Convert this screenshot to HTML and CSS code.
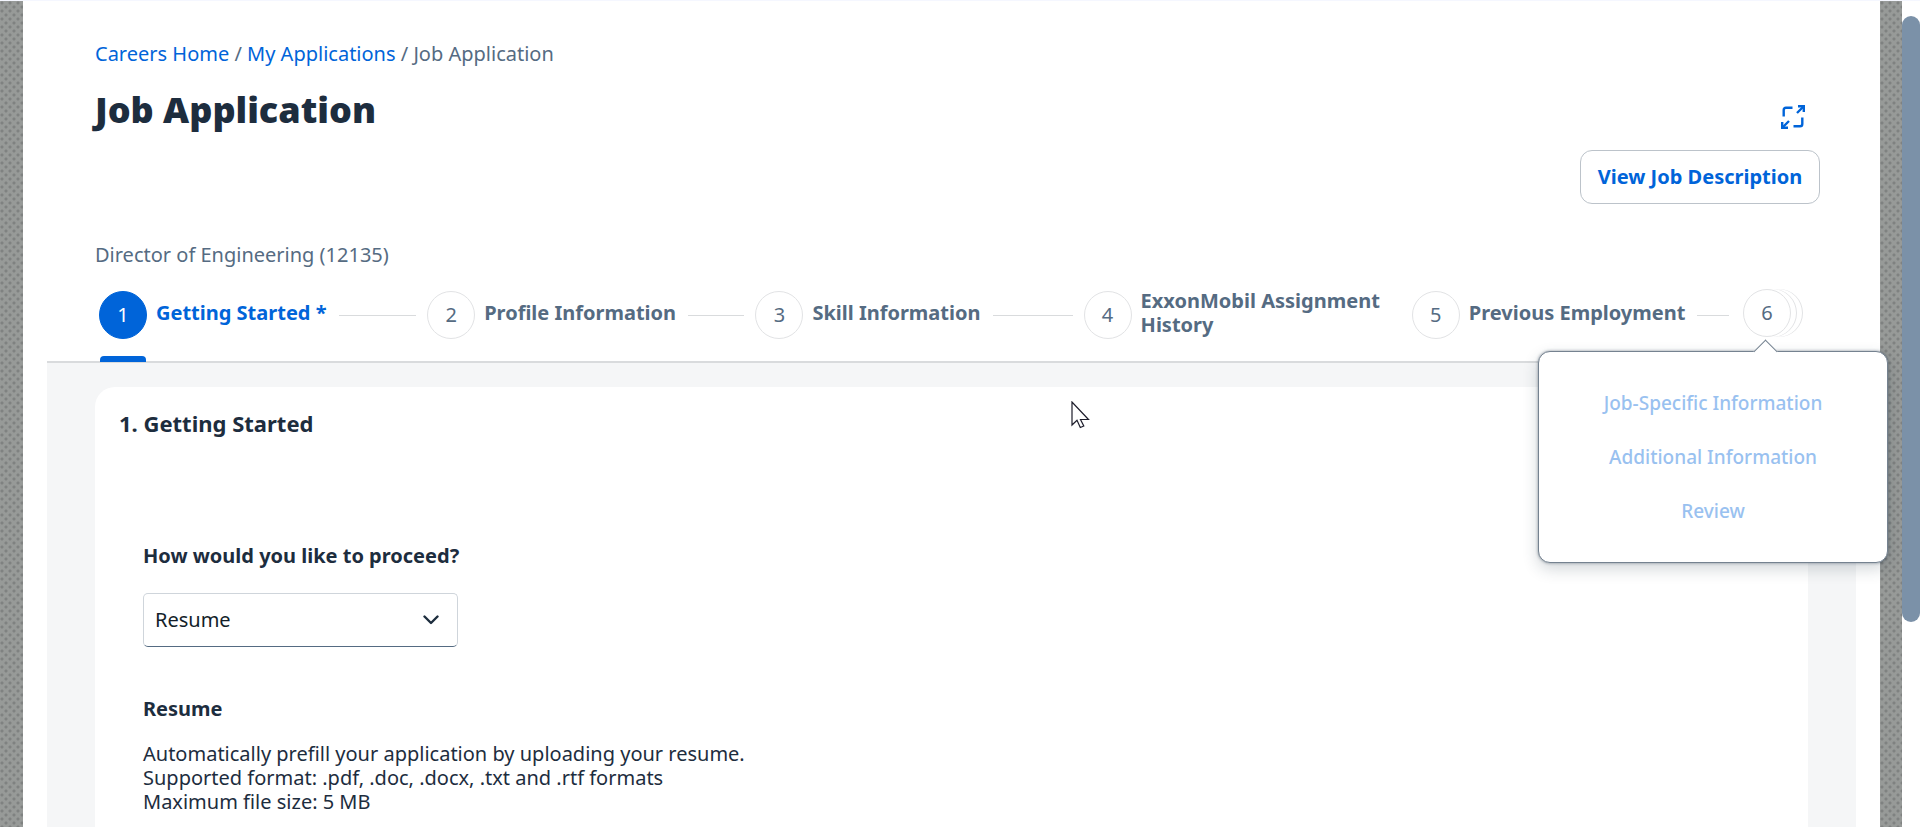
FILE: index.html
```html
<!DOCTYPE html>
<html lang="en">
<head>
    <meta charset="UTF-8">
    <meta name="viewport" content="width=device-width, initial-scale=1.0">
    <title>Job Application</title>
    <link rel="stylesheet" href="styles.css">
</head>
<body>

<div class="page">
    <main class="sheet">
        <header class="page-header">
            <nav class="breadcrumb" aria-label="Breadcrumb">
                <a href="#">Careers Home</a> / <a href="#">My Applications</a> / <span>Job Application</span>
            </nav>

            <div class="title-row">
                <h1>Job Application</h1>
                <div class="actions">
                    <button type="button" class="icon-btn" aria-label="Full screen">
                        <svg width="24" height="24" viewBox="0 0 24 24" fill="none" stroke="currentColor" stroke-width="2.4">
                            <path d="M2.7 11.5V5Q2.7 2.7 5 2.7H11.5"/>
                            <path d="M12.5 21.3H19Q21.3 21.3 21.3 19V12.5"/>
                            <path d="M16 8l6-6M8 16l-6 6"/>
                            <path d="M17 1.2h5.8V7M1.2 17v5.8H7"/>
                        </svg>
                    </button>
                    <button type="button" class="outline-btn">View Job Description</button>
                </div>
            </div>

            <p class="job-name">Director of Engineering (12135)</p>

            <!-- Wizard steps -->
            <ol class="steps">
                <li class="step active">
                    <span class="circle">1</span>
                    <span class="step-label">Getting Started *</span>
                    <span class="line"></span>
                </li>
                <li class="step">
                    <span class="circle">2</span>
                    <span class="step-label">Profile Information</span>
                    <span class="line"></span>
                </li>
                <li class="step">
                    <span class="circle">3</span>
                    <span class="step-label">Skill Information</span>
                    <span class="line"></span>
                </li>
                <li class="step">
                    <span class="circle">4</span>
                    <span class="step-label">ExxonMobil Assignment History</span>
                </li>
                <li class="step">
                    <span class="circle">5</span>
                    <span class="step-label">Previous Employment</span>
                    <span class="line"></span>
                </li>
                <li class="step more">
                    <button type="button" class="circle">6</button>
                    <!-- Remaining steps -->
                    <div class="popover">
                        <button type="button" disabled>Job-Specific Information</button>
                        <button type="button" disabled>Additional Information</button>
                        <button type="button" disabled>Review</button>
                    </div>
                </li>
            </ol>
        </header>

        <div class="content">
            <section class="card">
                <h2>1. Getting Started</h2>
                <form class="form">
                    <label for="proceed">How would you like to proceed?</label>
                    <div class="select-box">
                        <select id="proceed">
                            <option>Resume</option>
                        </select>
                        <svg width="16" height="10" viewBox="0 0 16 10" fill="none" stroke="currentColor" stroke-width="2.4" stroke-linecap="round" stroke-linejoin="round">
                            <path d="M1.5 1.5L8 8l6.5-6.5"/>
                        </svg>
                    </div>
                    <h3>Resume</h3>
                    <p>Automatically prefill your application by uploading your resume.<br>
                    Supported format: .pdf, .doc, .docx, .txt and .rtf formats<br>
                    Maximum file size: 5 MB</p>
                </form>
            </section>
        </div>
    </main>

    <div class="scrollbar"><div class="thumb"></div></div>
</div>

<svg class="pointer" width="19" height="28" viewBox="0 0 19 28" fill="#fff" stroke="#1d1d2b" stroke-width="1.2">
    <path d="M1 1v23l5-4.8 3.3 7.3 3.5-1.5-3.3-6.5H17.5z"/>
</svg>

</body>
</html>
```
FILE: styles.css
```css
* {
    box-sizing: border-box;
}
body {
    margin: 0;
    height: 100vh;
    overflow: hidden;
    border-top: 1px solid #f5f7ff;
    font-family: "Noto Sans", "Liberation Sans", sans-serif;
    font-size: 20px;
    line-height: 24px;
    color: #1d2d3e;
}
button, select {
    font: inherit;
}
h1, h2, h3, p, ol {
    margin: 0;
    padding: 0;
}
.page {
    display: flex;
    height: 100%;
    background-color: #979a98;
    background-image:
        radial-gradient(circle at 2px 2px, #7f8281 1px, transparent 2px),
        radial-gradient(circle at 6px 6px, #7f8281 1px, transparent 2px);
    background-size: 8px 8px;
}
.sheet {
    flex: 1;
    display: flex;
    flex-direction: column;
    min-width: 0;
    margin: 0 22px 0 23px;
    padding: 0 24px;
    background-color: white;
}
.page-header {
    padding: 41px 36px 22px 48px;
    border-bottom: 2px solid #d9dbdd;
}
.breadcrumb, .job-name {
    color: #556b82;
}
.breadcrumb a {
    color: #0064d9;
    text-decoration: none;
}
.title-row {
    display: flex;
    justify-content: space-between;
    margin-top: 22px;
}
h1 {
    font-size: 36px;
    line-height: 44px;
    font-weight: 900;
}
.actions {
    display: flex;
    flex-direction: column;
    align-items: flex-end;
    gap: 6px;
    padding-top: 2px;
}
.icon-btn {
    display: flex;
    padding: 15px;
    background: none;
    border: none;
    color: #0064d9;
}
.outline-btn {
    min-width: 240px;
    height: 54px;
    padding: 0 14px;
    background-color: white;
    border: 1px solid #bcc3ca;
    border-radius: 12px;
    color: #0064d9;
    font-weight: 700;
}
.job-name {
    margin-top: 39px;
}

/* Steps */
.steps {
    display: grid;
    grid-template-columns: repeat(5, 1fr) 80px;
    margin-top: 22px;
    padding-left: 4px;
    list-style: none;
}
.step {
    position: relative;
    display: flex;
    height: 50px;
    color: #556b82;
}
.circle {
    flex: none;
    display: flex;
    align-items: center;
    justify-content: center;
    width: 48px;
    height: 48px;
    margin-top: 2px;
    padding: 0;
    background-color: white;
    border: 1px solid #e2e3e5;
    border-radius: 50%;
    color: #556b82;
}
.step-label {
    display: flex;
    align-items: center;
    height: 48px;
    margin-left: 9px;
    font-weight: 700;
}
.line {
    flex: 1;
    height: 1px;
    margin: 26px 11px 0 12px;
    background-color: #d9dbdd;
}
.active .circle {
    background-color: #0064d9;
    border-color: #0064d9;
    color: white;
}
.active .step-label {
    color: #0064d9;
}
.active::after {
    content: "";
    position: absolute;
    left: 1px;
    bottom: -23px;
    width: 46px;
    height: 6px;
    background-color: #0064d9;
    border-radius: 4px 4px 0 0;
}
.more .circle {
    margin: 0 0 0 3px;
    box-shadow: 5px 0 0 white, 6px 0 0 #e2e3e5, 11px 0 0 white, 12px 0 0 #e2e3e5;
}

/* Popover */
.popover {
    position: absolute;
    top: 62px;
    right: -68px;
    z-index: 1;
    display: flex;
    flex-direction: column;
    width: 350px;
    padding: 24px 0;
    background-color: white;
    border: 1px solid #758290;
    border-radius: 12px;
    box-shadow: 0 0 3px rgba(34, 53, 72, 0.5), 0 6px 16px rgba(34, 53, 72, 0.2);
}
.popover::before {
    content: "";
    position: absolute;
    top: -9px;
    left: 218px;
    width: 16px;
    height: 16px;
    background-color: white;
    border: 1px solid #758290;
    border-right: none;
    border-bottom: none;
    transform: rotate(45deg);
}
.popover button {
    height: 54px;
    background: none;
    border: none;
    color: #99c1f0;
    font-size: 19px;
    font-weight: 500;
}

/* Content */
.content {
    flex: 1;
    padding: 24px 48px 0;
    background-color: #f5f6f7;
}
.card {
    height: 100%;
    padding: 24px;
    background-color: white;
    border-radius: 20px 20px 0 0;
}
h2 {
    font-size: 22px;
    line-height: 24px;
    font-weight: 700;
}
.form {
    padding: 109px 24px 0;
}
.form label {
    display: block;
    font-weight: 700;
}
.select-box {
    position: relative;
    width: 315px;
    margin-top: 25px;
}
.select-box select {
    display: block;
    width: 100%;
    height: 54px;
    padding: 0 11px;
    appearance: none;
    background-color: white;
    border: 1px solid #cfd5db;
    border-bottom-color: #556b82;
    border-radius: 5px;
    color: #131e29;
}
.select-box svg {
    position: absolute;
    top: 22px;
    right: 19px;
    pointer-events: none;
}
h3 {
    margin-top: 50px;
    font-size: 20px;
    line-height: 24px;
    font-weight: 700;
}
.form p {
    margin-top: 21px;
}

/* Scrollbar */
.scrollbar {
    width: 18px;
    padding-top: 15px;
    background-color: white;
}
.thumb {
    height: 606px;
    background-color: #7b91a8;
    border-radius: 9px;
}
.pointer {
    position: absolute;
    top: 401px;
    left: 1071px;
}
```
